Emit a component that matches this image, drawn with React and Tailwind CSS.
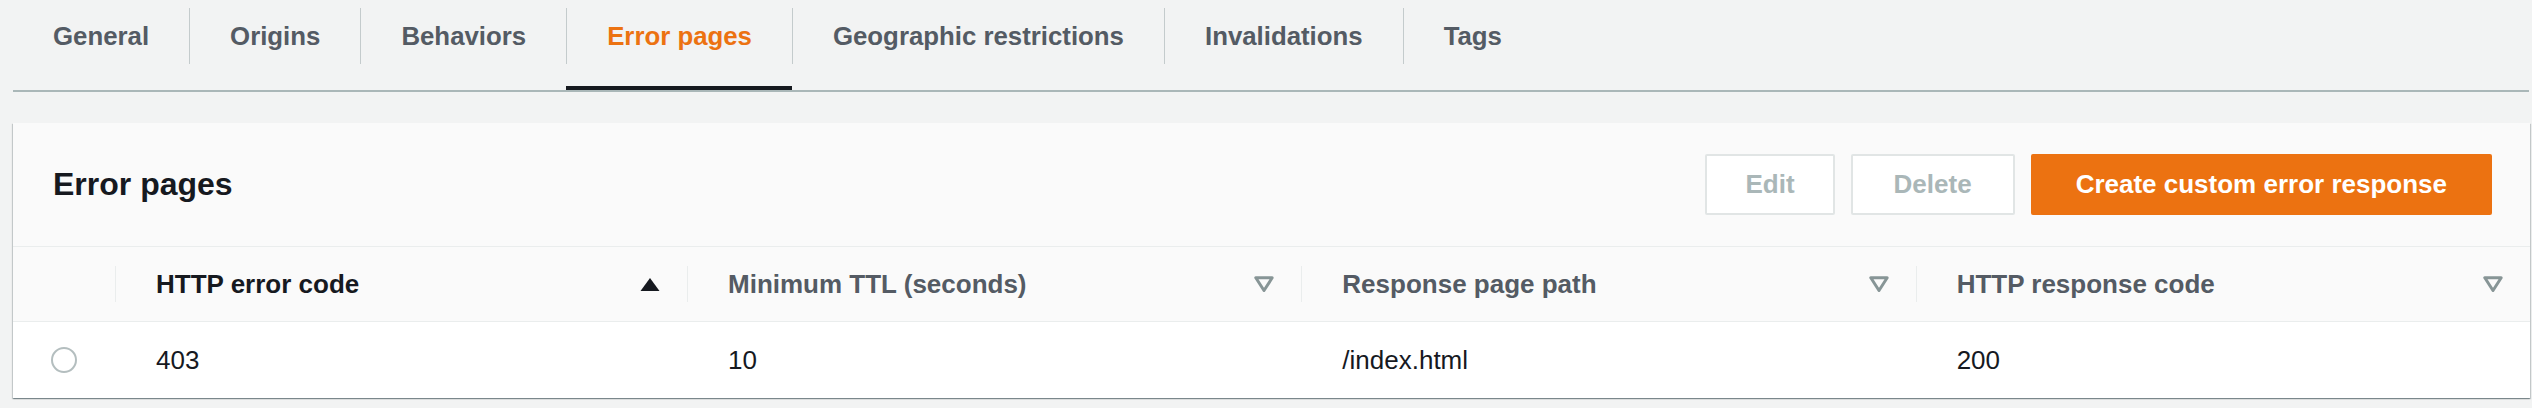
import React, { useState } from "react";

const tabs = [
  "General",
  "Origins",
  "Behaviors",
  "Error pages",
  "Geographic restrictions",
  "Invalidations",
  "Tags",
];

const SortUp = () => (
  <svg width="20" height="15" viewBox="0 0 20 15">
    <polygon points="10,1 19.5,14 0.5,14" fill="#16191f" />
  </svg>
);

const SortNone = () => (
  <svg width="20" height="16" viewBox="0 0 20 16">
    <polygon
      points="1.8,1.8 18.2,1.8 10,14.5"
      fill="none"
      stroke="#879596"
      strokeWidth="3"
      strokeLinejoin="round"
    />
  </svg>
);

const columns = [
  { label: "HTTP error code", sorted: true },
  { label: "Minimum TTL (seconds)" },
  { label: "Response page path" },
  { label: "HTTP response code" },
];

const rows = [{ code: "403", ttl: "10", path: "/index.html", response: "200" }];

const App = () => {
  const [activeTab, setActiveTab] = useState("Error pages");
  const [selected, setSelected] = useState(null);

  return (
    <div
      className="w-[2532px] h-[408px] bg-[#f2f3f3] overflow-hidden"
      style={{ fontFamily: '"Liberation Sans", Arial, sans-serif' }}
    >
      {/* Tabs */}
      <div className="ml-[13px] mr-[3px] flex border-b-2 border-[#aab7b8]">
        {tabs.map((tab, i) => (
          <button
            key={tab}
            onClick={() => setActiveTab(tab)}
            className="h-[90px] flex flex-col pt-[8px]"
          >
            <div
              className={`h-[56px] flex items-center px-[40px] text-[25.8px] font-bold whitespace-nowrap ${
                i > 0 ? "border-l border-[#c4cbcc]" : ""
              } ${activeTab === tab ? "text-[#ec7211]" : "text-[#545b64]"}`}
            >
              {tab}
            </div>
            <div className="flex-1" />
            <div
              className={`h-[4px] ${
                activeTab === tab ? "bg-[#16191f]" : "bg-transparent"
              }`}
            />
          </button>
        ))}
      </div>

      {/* Card */}
      <div className="mt-[31px] ml-[13px] mr-[2px] bg-white shadow-[0_1px_1px_0_rgba(0,28,36,0.3),1px_1px_1px_0_rgba(0,28,36,0.15),-1px_1px_1px_0_rgba(0,28,36,0.15)]">
        {/* Header */}
        <div className="h-[124px] bg-[#fafafa] border-b border-[#eaeded] flex items-center justify-between px-[40px]">
          <h2 className="text-[32px] font-bold text-[#16191f] mt-[-1px]">
            Error pages
          </h2>
          <div className="flex items-center gap-[16px] mr-[-2px]">
            <button className="h-[61px] px-[38px] border-2 border-[#e1e5e5] rounded-[2px] bg-white text-[26px] font-bold text-[#aab7b8]">
              Edit
            </button>
            <button className="h-[61px] px-[41px] border-2 border-[#e1e5e5] rounded-[2px] bg-white text-[26px] font-bold text-[#aab7b8]">
              Delete
            </button>
            <button className="h-[61px] px-[43px] border-2 border-[#ec7211] rounded-[2px] bg-[#ec7211] text-[26px] font-bold text-white">
              Create custom error response
            </button>
          </div>
        </div>

        {/* Table header */}
        <div className="grid grid-cols-[102px_572px_1fr_1fr_1fr] h-[75px] bg-[#fafafa] border-b border-[#eaeded]">
          <div />
          {columns.map((col) => (
            <div key={col.label} className="flex items-center">
              <div className="h-[36px] w-full flex items-center justify-between border-l border-[#eaeded] pl-[40px] pr-[27px]">
                <span
                  className={`text-[26px] font-bold ${
                    col.sorted ? "text-[#16191f]" : "text-[#545b64]"
                  }`}
                >
                  {col.label}
                </span>
                {col.sorted ? <SortUp /> : <SortNone />}
              </div>
            </div>
          ))}
        </div>

        {/* Rows */}
        {rows.map((row, i) => (
          <div
            key={i}
            onClick={() => setSelected(i)}
            className="grid grid-cols-[102px_572px_1fr_1fr_1fr] h-[76px] bg-white text-[26px] text-[#16191f]"
          >
            <div className="flex items-center justify-center">
              <span
                className={`w-[26px] h-[26px] rounded-full border-2 ${
                  selected === i ? "border-[#ec7211]" : "border-[#b4bebf]"
                } bg-white`}
              />
            </div>
            <div className="flex items-center pl-[41px]">{row.code}</div>
            <div className="flex items-center pl-[41px]">{row.ttl}</div>
            <div className="flex items-center pl-[41px]">{row.path}</div>
            <div className="flex items-center pl-[41px]">{row.response}</div>
          </div>
        ))}
      </div>
    </div>
  );
};

export default App;
